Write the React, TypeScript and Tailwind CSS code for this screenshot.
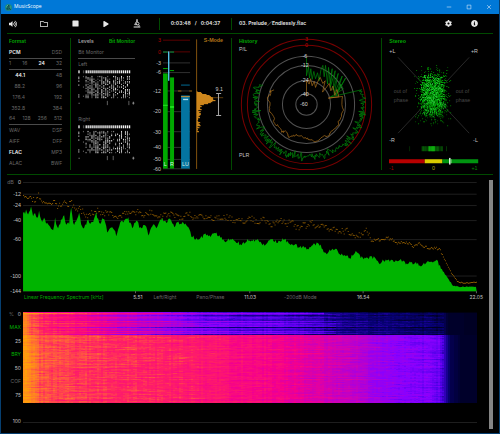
import type { ReactNode } from 'react';
import { clsx } from 'clsx';
import { FaCog, FaInfoCircle, FaPlay, FaRegFolder, FaStop, FaVolumeUp } from 'react-icons/fa';

type Point = [number, number];

// seeded so the plots look the same on every render
function createRandom(seed: number) {
  let s = seed;
  return () => {
    s = (s * 1664525 + 1013904223) % 4294967296;
    return s / 4294967296;
  };
}

function interpolate(points: Point[], x: number) {
  if (x <= points[0][0]) return points[0][1];
  for (let i = 1; i < points.length; i++) {
    const [x1, y1] = points[i];
    const [x0, y0] = points[i - 1];
    if (x <= x1) return y0 + ((y1 - y0) * (x - x0)) / (x1 - x0);
  }
  return points[points.length - 1][1];
}

const toPath = (points: Point[]) =>
  points.map(([x, y], i) => `${i ? 'L' : 'M'}${x.toFixed(1)} ${y.toFixed(1)}`).join('');

/* ---------- Title bar + toolbar ---------- */

function TitleBar() {
  return (
    <header className="flex h-[14px] items-center bg-[#0078d7] px-[7px] text-[5px] text-white">
      <svg viewBox="0 0 14 14" className="-ml-[3px] mr-[2px] size-[7px]">
        <circle cx="7" cy="7" r="7" fill="#1d8a80" />
        <path d="M4 11V8M6 12V3l3 1v5M9 9l2 3" stroke="#0b2d33" strokeWidth="1.5" fill="none" />
        <path d="M3 5l3-3M8 6h3" stroke="#9fe0c0" strokeWidth="1" />
      </svg>
      <h1 className="font-['Open_Sans','Noto_Sans',sans-serif]">MusicScope</h1>
      <div className="ml-auto flex gap-[14px]">
        <WindowButton label="Minimize" d="M1 4h6" />
        <WindowButton label="Maximize" d="M1.5 1.5h5v5h-5z" />
        <WindowButton label="Close" d="M1.5 1.5l5 5M6.5 1.5l-5 5" />
      </div>
    </header>
  );
}

function WindowButton({ label, d }: { label: string; d: string }) {
  return (
    <button aria-label={label}>
      <svg viewBox="0 0 8 8" className="size-[6px]">
        <path d={d} stroke="#d5e8fa" strokeWidth="0.8" fill="none" />
      </svg>
    </button>
  );
}

function MicroscopeIcon() {
  return (
    <svg viewBox="0 0 24 27" className="h-[9px] w-2" fill="none" stroke="currentColor">
      <path d="M12 1v8" strokeWidth="4" />
      <path d="M10 8l-5 9h8" strokeWidth="2.5" />
      <circle cx="14" cy="14" r="4" strokeWidth="2.5" />
      <path d="M17 17c2 2 2 4 0 6M2 24h20" strokeWidth="3" />
    </svg>
  );
}

function IconButton({ label, children }: { label: string; children: ReactNode }) {
  return (
    <button aria-label={label} className="flex w-[10px] justify-center text-[#e8e8e8]">
      {children}
    </button>
  );
}

function Toolbar() {
  return (
    <nav className="mx-[6px] flex h-5 items-center border-b border-[#004a00] text-[5px] font-bold text-[#dcdcdc]">
      <div className="flex h-3 w-[153px] items-center justify-between border-r border-[#004a00] pl-[1px] pr-[17px]">
        <IconButton label="Volume"><FaVolumeUp size={8} /></IconButton>
        <IconButton label="Open"><FaRegFolder size={8} /></IconButton>
        <IconButton label="Stop"><FaStop size={7} /></IconButton>
        <IconButton label="Play"><FaPlay size={6} /></IconButton>
        <IconButton label="Analyze"><MicroscopeIcon /></IconButton>
      </div>
      <div className="flex h-3 w-[72px] items-center justify-center gap-1 border-r border-[#004a00]">
        <span>0:03:48</span>
        <span>/</span>
        <span>0:04:37</span>
      </div>
      <p className="ml-[7px] whitespace-nowrap">03. Prelude／Endlessly.flac</p>
      <div className="ml-auto flex items-center gap-4 pr-[14px]">
        <IconButton label="Settings"><FaCog size={7} /></IconButton>
        <IconButton label="Info"><FaInfoCircle size={7} /></IconButton>
      </div>
    </nav>
  );
}

/* ---------- Format ---------- */

interface FormatRow {
  items: string[];
  active?: string;
  line?: boolean;
  rate?: boolean;
}

const FORMAT_ROWS: FormatRow[] = [
  { items: ['PCM', 'DSD'], active: 'PCM', line: true },
  { items: ['1', '16', '24', '32'], active: '24', line: true },
  { items: ['44.1', '48'], active: '44.1', rate: true },
  { items: ['88.2', '96'], rate: true },
  { items: ['176.4', '192'], rate: true },
  { items: ['352.8', '384'], rate: true },
  { items: ['64', '128', '256', '512'], line: true },
  { items: ['WAV', 'DSF'] },
  { items: ['AIFF', 'DFF'] },
  { items: ['FLAC', 'MP3'], active: 'FLAC' },
  { items: ['ALAC', 'BWF'] },
];

function FormatPanel() {
  return (
    <section className="my-1 border-r border-[#004a00] pl-[2px] pr-[8px]">
      <h2 className="h-[10px] font-semibold leading-[6px] text-[#00a800]">Format</h2>
      {FORMAT_ROWS.map((row) => (
        <div
          key={row.items[0]}
          className={clsx(
            'flex h-[11px] items-center justify-between',
            row.line && 'border-b border-[#4a4a4a]'
          )}
        >
          {row.items.map((item, i) => (
            <span
              key={item}
              className={clsx(
                item === row.active ? 'font-semibold text-[#eeeeee]' : 'text-[#686868]',
                row.rate && i === 0 && 'w-4 text-right'
              )}
            >
              {item}
            </span>
          ))}
        </div>
      ))}
    </section>
  );
}

/* ---------- Bit monitor ---------- */

function BitMatrix({ seed, marks }: { seed: number; marks: number[] }) {
  const random = createRandom(seed);
  const columns = Array.from({ length: 23 }, (_, i) => 38 + i * 6);
  const dots: { x: number; y: number; o: number }[] = [];
  columns.forEach((x) => {
    const density = 0.4 + random() * 0.4;
    for (let y = 18; y < 84; y += 4) {
      if (random() < density) dots.push({ x, y, o: 0.35 + random() * 0.65 });
    }
  });
  [20, 24, 32, 44, 74, 80].forEach((y) => dots.push({ x: 16, y, o: 0.8 }));
  [18, 50, 78].forEach((y) => dots.push({ x: 30, y, o: 0.4 }));

  return (
    <svg viewBox="15 0 174 114" className="block w-full" fill="#f4f4f4">
      <rect x="16" y="1" width="4" height="9" />
      <rect x="30" y="1" width="4" height="9" opacity="0.3" />
      {columns.map((x) => (
        <rect key={x} x={x} y="1" width="4" height="9" />
      ))}
      {dots.map((d, i) => (
        <rect key={i} x={d.x} y={d.y} width="3" height="4" opacity={d.o} />
      ))}
      <g fill="#909090">
        <rect x="16" y="100" width="5" height="2" />
        {marks.map((x) => (
          <rect key={x} x={x} y="94" width="2" height="13" />
        ))}
        <path d="M180 100h7v2h-7zM182 97h3v8h-3z" />
      </g>
    </svg>
  );
}

function BitMonitorPanel() {
  return (
    <section className="my-1 pl-[7px] pr-[12px]">
      <div className="flex h-[10px] justify-between whitespace-nowrap leading-[6px]">
        <button className="flex font-semibold text-[#a0a0a0]">Levels</button>
        <button className="flex font-semibold text-[#00a800]">Bit Monitor</button>
      </div>
      <h2 className="flex h-[11px] items-center border-b border-[#4a4a4a] text-[#686868]">
        Bit Monitor
      </h2>
      <h3 className="h-[11px] leading-[11px] text-[#686868]">Left</h3>
      <BitMatrix seed={11} marks={[103, 169]} />
      <h3 className="mt-[7px] h-[11px] leading-[11px] text-[#686868]">Right</h3>
      <BitMatrix seed={29} marks={[103, 121]} />
    </section>
  );
}

/* ---------- Level meters ---------- */

const METER_SCALE: [string, number][] = [
  ['3', 18], ['0', 53], ['-3', 86], ['-6', 115], ['-12', 170], ['-20', 232],
  ['-30', 292], ['-40', 339], ['-50', 375], ['-60', 403],
];

const LOUDNESS: Point[] = [
  [171, 4], [176, 16], [180, 26], [184, 40], [190, 50], [196, 54], [202, 50], [206, 40],
  [209, 22], [213, 14], [218, 10], [224, 12], [230, 7], [240, 11], [245, 6], [255, 4],
  [270, 10], [275, 5], [290, 3],
];

function MeterPanel() {
  const random = createRandom(5);
  const bars: Point[] = [];
  for (let y = 171; y < 292; y += 3) {
    bars.push([y, Math.max(2, interpolate(LOUDNESS, y) + (random() - 0.5) * 9)]);
  }

  return (
    <section>
      <svg viewBox="6 0 252 420" className="block w-full overflow-visible" fontSize="16">
        {METER_SCALE.map(([label, y]) => {
          const red = label === '3' || label === '0';
          return (
            <g key={label}>
              <rect x="54" y={y - 1} width="81" height="3" fill={red ? '#5c0000' : '#303030'} />
              <text
                x="48"
                y={y}
                textAnchor="end"
                dominantBaseline="central"
                fill={red ? '#b00000' : '#c4c4c4'}
              >
                {label}
              </text>
            </g>
          );
        })}
        <g fill="#00a800">
          <rect x="54" y="118" width="14" height="285" />
          <rect x="75" y="130" width="12" height="273" />
          <rect x="54" y="102" width="14" height="3" />
          <rect x="75" y="108" width="12" height="3" />
          <rect x="54" y="52" width="14" height="4" fill="#007a38" />
          <rect x="75" y="52" width="12" height="4" fill="#007a38" />
          <rect x="54" y="212" width="14" height="3" fill="#20e820" />
          <rect x="75" y="216" width="12" height="5" fill="#20e820" />
        </g>
        <rect x="69" y="52" width="4" height="88" fill="#58c8f0" />
        <rect x="108" y="184" width="26" height="219" fill="#0474a0" />
        <rect x="108" y="151" width="26" height="4" fill="#00506e" />
        <rect x="108" y="186" width="26" height="3" fill="#c88a30" />
        <rect x="114" y="194" width="15" height="4" fill="#b0e0f4" />
        <path d="M99 171h10M133 171h8" stroke="#9a6414" strokeWidth="3" />
        <g fill="#dcece4" textAnchor="middle">
          <text x="61" y="396">L</text>
          <text x="81" y="396">R</text>
          <text x="121" y="396">LU</text>
        </g>

        <rect x="153" y="16" width="3" height="388" fill="#80520e" />
        <g fill="#e89820">
          {bars.map(([y, w]) => (
            <rect key={y} x="155" y={y} width={w} height="3" />
          ))}
        </g>
        <rect x="200" y="190" width="34" height="2" fill="#8a5a10" />
        <path d="M213 178h15M220 178v66M213 244h15" stroke="#a8a8a8" strokeWidth="3" fill="none" />
        <text x="222" y="170" textAnchor="middle" fill="#c8c8c8">9.1</text>
        <text x="205" y="24" textAnchor="middle" fontWeight="bold" fill="#b07418">S-Mode</text>
      </svg>
    </section>
  );
}

/* ---------- History ---------- */

const RINGS: { r: number; label: string; color: string }[] = [
  { r: 195, label: '3', color: '#780000' },
  { r: 177, label: '0', color: '#780000' },
  { r: 144, label: '-6', color: '#525252' },
  { r: 117, label: '-12', color: '#525252' },
  { r: 72, label: '-24', color: '#525252' },
  { r: 32, label: '-40', color: '#525252' },
];

const PLR_RADIUS: Point[] = [
  [76, 170], [90, 168], [115, 166], [135, 165], [155, 158], [180, 155],
  [205, 158], [230, 157], [250, 153], [270, 150], [283, 156], [294, 148],
];

const LOUDNESS_POINTS: Point[] = [
  [235, 187], [235, 138], [243, 150], [247, 134], [252, 155], [258, 142], [262, 160], [270, 140],
  [276, 130], [284, 148], [291, 140], [283, 174], [296, 158], [303, 148], [308, 170], [314, 156],
  [320, 184], [326, 166], [332, 188], [300, 192], [343, 187], [346, 228], [338, 250],
  [326, 276], [310, 290], [298, 306], [283, 308], [262, 322], [240, 316], [232, 310],
  [210, 305], [196, 303], [182, 310], [172, 290], [160, 294], [150, 276], [140, 268],
  [132, 240], [124, 228], [126, 208], [118, 190], [128, 178], [126, 170], [138, 168],
];

const PEAK_POINTS: Point[] = [
  [235, 72], [235, 125], [241, 98], [244, 132], [248, 104], [252, 136], [257, 112], [262, 134],
  [268, 116], [273, 140], [278, 108], [284, 94], [288, 128], [292, 94], [298, 150], [301, 100],
  [306, 148], [312, 104], [306, 160], [321, 110], [314, 168], [330, 118], [318, 178],
  [342, 126], [324, 184], [352, 132], [330, 170], [338, 150], [345, 165], [306, 189], [400, 167],
];

function HistoryPanel() {
  const random = createRandom(77);
  const plr: Point[] = [];
  for (let a = 76; a <= 294; a += 0.8) {
    const rad = (a * Math.PI) / 180;
    const r = interpolate(PLR_RADIUS, a) + (random() + random() - 1) * 15;
    plr.push([235 + Math.sin(rad) * r, 211 - Math.cos(rad) * r]);
  }
  const loudness: Point[] = [];
  LOUDNESS_POINTS.forEach(([x, y], i) => {
    loudness.push([x, y]);
    const next = LOUDNESS_POINTS[i + 1];
    if (i > 19 && next) {
      for (let k = 1; k < 4; k++) {
        loudness.push([
          x + ((next[0] - x) * k) / 4 + (random() - 0.5) * 7,
          y + ((next[1] - y) * k) / 4 + (random() - 0.5) * 7,
        ]);
      }
    }
  });

  return (
    <section className="my-1 border-l border-[#004a00]">
      <svg viewBox="12 12 444 396" className="block w-full overflow-visible" fill="none" fontSize="16">
        {RINGS.map((ring) => (
          <circle key={ring.r} cx="235" cy="211" r={ring.r} stroke={ring.color} strokeWidth="3" />
        ))}
        <path d={toPath([...PEAK_POINTS, ...plr])} stroke="#008c0a" strokeWidth="2" />
        <path d={toPath(loudness)} stroke="#b0741c" strokeWidth="2" />
        {RINGS.map((ring) => (
          <text
            key={ring.r}
            x={ring.r > 170 ? 235 : 230}
            y={211 - ring.r}
            textAnchor="middle"
            dominantBaseline="central"
            fill={ring.r > 170 ? '#c00000' : '#d8d8d8'}
          >
            {ring.label}
          </text>
        ))}
        <text x="227" y="211" textAnchor="middle" dominantBaseline="central" fill="#d8d8d8">
          -60
        </text>
        <text x="33" y="26" fontWeight="bold" fill="#00a800">History</text>
        <text x="33" y="50" fill="#c4c4c4">P/L</text>
        <text x="33" y="368" fill="#c4c4c4">PLR</text>
      </svg>
    </section>
  );
}

/* ---------- Stereo ---------- */

const CLOUD_SHADES = ['#004800', '#007400', '#009c08', '#20bc30'];

function StereoPanel() {
  const random = createRandom(404);
  const cloud = CLOUD_SHADES.map(() => '');
  const addDot = (dx: number, dy: number, level: number) => {
    const x = Math.round((161 + dx) / 3) * 3;
    const y = Math.round((182 + dy) / 3) * 3;
    cloud[Math.min(3, Math.floor(level))] += `M${x} ${y}h3v3h-3z`;
  };
  // loose halo first, dense core on top
  for (let i = 0; i < 700; i++) {
    addDot((random() + random() - 1) * 58, (random() + random() - 1) * 96, random() * 1.8);
  }
  for (let i = 0; i < 1500; i++) {
    addDot((random() + random() * 0.5 - 0.75) * 54, (random() + random() * 0.5 - 0.75) * 88, random() * 3.5);
  }
  const strip = Array.from({ length: 24 }, (_, i) => ({
    x: 126 + i * 2.7,
    o: 0.15 + 0.75 * random() * (1 - Math.abs(i - 12) / 18),
  }));

  return (
    <section className="my-1 border-l border-[#004a00]">
      <svg viewBox="9 12 333 396" className="block w-full overflow-visible" fontSize="16">
        <path d="M57 70L270 297M270 70L57 297" stroke="#3c3c3c" strokeWidth="2" />
        {cloud.map((d, i) => (
          <path key={i} d={d} fill={CLOUD_SHADES[i]} />
        ))}
        <text x="31" y="26" fontWeight="bold" fill="#00a800">Stereo</text>
        <g fill="#c4c4c4">
          <text x="31" y="57">+L</text>
          <text x="296" y="57" textAnchor="end">+R</text>
          <text x="31" y="322">-R</text>
          <text x="296" y="322" textAnchor="end">-L</text>
        </g>
        <g fill="#484848">
          <text x="44" y="176">out of</text>
          <text x="44" y="203">phase</text>
          <text x="230" y="176">out of</text>
          <text x="230" y="203">phase</text>
        </g>
        <g fill="#10c010">
          {strip.map((s) => (
            <rect key={s.x} x={s.x} y="336" width="3" height="15" opacity={s.o} />
          ))}
          <rect x="148" y="336" width="20" height="15" opacity="0.7" />
          <rect x="91" y="336" width="2" height="15" opacity="0.3" />
          <rect x="201" y="336" width="2" height="15" opacity="0.4" />
        </g>
        <rect x="30" y="375" width="107" height="12" fill="#b80000" />
        <rect x="137" y="375" width="53" height="12" fill="#dccc00" />
        <rect x="190" y="375" width="107" height="12" fill="#009410" />
        <rect x="210" y="371" width="4" height="20" fill="#ffffff" />
        <rect x="216" y="375" width="2" height="12" fill="#70c070" />
        <text x="30" y="408" fill="#a00000">-1</text>
        <text x="163" y="408" textAnchor="middle" fill="#b4a800">0</text>
        <text x="295" y="408" textAnchor="end" fill="#008c00">+1</text>
      </svg>
    </section>
  );
}

/* ---------- Frequency spectrum ---------- */

const SPECTRUM_SCALE: [string, number][] = [
  ['0', 25], ['-12', 60], ['-24', 94], ['-40', 139], ['-60', 196], ['-100', 305], ['-144', 350],
];

const CURRENT: Point[] = [
  [69, 120], [78, 112], [85, 125], [92, 97], [98, 125], [103, 112], [112, 140], [116, 110],
  [124, 145], [132, 130], [140, 150], [150, 158], [160, 168], [165, 135], [172, 160], [180, 150],
  [190, 120], [197, 148], [207, 148], [213, 96], [220, 150], [230, 140], [238, 118], [245, 160],
  [255, 155], [262, 138], [275, 150], [288, 117], [297, 150], [308, 130], [315, 145], [322, 180],
  [335, 155], [348, 183], [360, 145], [372, 140], [383, 133], [395, 160], [411, 136], [418, 165],
  [434, 152], [445, 182], [457, 150], [470, 160], [484, 133], [495, 145], [508, 138], [520, 155],
  [535, 145], [560, 152], [572, 182], [590, 198], [605, 190], [616, 180], [630, 188], [645, 176],
  [660, 188], [672, 205], [690, 195], [710, 203], [724, 215], [740, 195], [750, 200], [770, 198],
  [790, 212], [800, 205], [812, 196], [830, 205], [850, 195], [870, 210], [900, 218], [920, 222],
  [935, 215], [950, 208], [962, 218], [970, 238], [990, 230], [1005, 225], [1025, 245],
  [1050, 250], [1068, 230], [1080, 250], [1100, 252], [1122, 248], [1132, 268], [1150, 258],
  [1170, 262], [1195, 255], [1215, 268], [1240, 266], [1260, 272], [1280, 263], [1310, 262],
  [1325, 290], [1340, 310], [1355, 333], [1380, 338], [1400, 338], [1427, 336],
];

const MAXIMUM: Point[] = [
  [69, 70], [85, 72], [100, 78], [115, 62], [130, 88], [150, 85], [163, 75], [172, 98],
  [190, 88], [205, 90], [213, 85], [222, 105], [240, 105], [258, 122], [275, 115], [290, 108],
  [310, 118], [330, 115], [345, 128], [365, 122], [385, 110], [410, 112], [430, 125], [452, 110],
  [475, 128], [500, 118], [530, 125], [545, 130], [560, 115], [580, 130], [600, 122], [625, 128],
  [650, 132], [670, 125], [700, 138], [730, 142], [750, 130], [765, 142], [790, 132], [810, 150],
  [840, 138], [855, 150], [870, 140], [890, 162], [905, 145], [920, 158], [932, 138], [945, 165],
  [965, 148], [990, 165], [1020, 168], [1040, 170], [1060, 182], [1085, 180], [1093, 160],
  [1110, 198], [1135, 195], [1160, 190], [1190, 205], [1220, 203], [1235, 218], [1255, 208],
  [1280, 220], [1315, 222], [1330, 255], [1350, 295], [1370, 322], [1390, 325], [1427, 323],
];

function SpectrumChart() {
  const random = createRandom(9);
  const current: Point[] = [];
  for (let x = 69; x <= 1427; x += 3) {
    const amount = x > 1320 ? 4 : 11;
    current.push([x, interpolate(CURRENT, x) + (random() - 0.5) * amount]);
  }
  let dots = '';
  for (let x = 69; x <= 1427; x += 3) {
    const amount = x > 1320 ? 2 : x > 1110 ? 9 : 18;
    const y = interpolate(MAXIMUM, x) + (random() - 0.5) * amount;
    dots += `M${x} ${y.toFixed(1)}h3v3h-3z`;
  }

  return (
    <svg viewBox="21 6 1407 348" className="block w-full overflow-visible" fontSize="16">
      {SPECTRUM_SCALE.map(([label, y]) => (
        <g key={label}>
          <rect x="69" y={y - 1} width="1358" height="3" fill="#1e1e1e" />
          <text x="63" y={y} textAnchor="end" dominantBaseline="central" fill="#c4c4c4">
            {label}
          </text>
        </g>
      ))}
      <text x="22" y="25" dominantBaseline="central" fill="#686868">dB</text>
      <path d={dots} fill="#8c5a00" />
      <path d={`${toPath(current)}L1427 351L69 351Z`} fill="#00b400" />
      {[406, 748, 1087, 1426].map((x) => (
        <rect key={x} x={x - 1} y="351" width="2" height="6" fill="#909090" />
      ))}
    </svg>
  );
}

function FrequencyAxis() {
  const value = '-mr-[6px] text-[#c4c4c4]';
  return (
    <div className="ml-4 grid h-[9px] grid-cols-4 items-center whitespace-nowrap leading-[6px] text-[#686868]">
      <div className="flex justify-between pl-[1px]">
        <button className="text-[#00a800]">Linear Frequency Spectrum [kHz]</button>
        <span className={value}>5.51</span>
      </div>
      <div className="flex justify-between pl-[17px]">
        <button>Left/Right</button>
        <button>Pano/Phase</button>
        <span className={value}>11.03</span>
      </div>
      <div className="flex justify-between pl-[34px]">
        <button>-200dB Mode</button>
        <span className={value}>16.54</span>
      </div>
      <div className="flex justify-end">
        <span className={value}>22.05</span>
      </div>
    </div>
  );
}

/* ---------- Spectrogram ---------- */

const PALETTE: [number, number, number, number][] = [
  [0, 0, 0, 16],
  [0.08, 0, 0, 40],
  [0.2, 8, 0, 120],
  [0.35, 80, 0, 232],
  [0.45, 136, 0, 255],
  [0.6, 200, 0, 190],
  [0.7, 245, 0, 140],
  [0.8, 255, 32, 100],
  [0.9, 255, 110, 50],
  [1, 255, 160, 8],
];

const LEVELS = 60;

const paletteColor = (t: number) => {
  const [r, g, b] = [1, 2, 3].map((c) =>
    Math.round(interpolate(PALETTE.map((p): Point => [p[0], p[c]]), t))
  );
  return `rgb(${r},${g},${b})`;
};

const LOWER: Point[] = [
  [0, 0.99], [6, 0.95], [16, 0.87], [50, 0.83], [100, 0.81], [170, 0.78], [227, 0.73],
  [277, 0.67], [330, 0.58], [360, 0.48], [400, 0.43], [414, 0.4], [420, 0.28], [426, 0.14],
  [436, 0.09], [453, 0.08],
];

const UPPER: Point[] = [
  [0, 0.96], [6, 0.88], [20, 0.8], [60, 0.73], [100, 0.62], [140, 0.53], [180, 0.42], [230, 0.38],
  [280, 0.34], [320, 0.23], [400, 0.17], [418, 0.15], [424, 0.08], [453, 0.07],
];

function Spectrogram() {
  const random = createRandom(2024);
  const columnNoise = Array.from({ length: 227 }, () => (random() - 0.5) * 0.035);
  const cells = Array.from({ length: LEVELS + 1 }, () => '');

  for (let y = 0; y < 91; y++) {
    const upper = y < 23;
    const row = (random() - 0.5) * (upper ? 0.14 : 0.035);
    const dark = upper && (y === 3 || y === 7 || y === 15 || y === 22) ? -0.12 : 0;
    let drift = 0;
    for (let i = 0; i < 227; i++) {
      const x = i * 2;
      drift = drift * 0.75 + (random() - 0.5) * 0.04;
      let t = interpolate(upper ? UPPER : LOWER, x);
      if (y === 0) t -= 0.1;
      if (y === 1 && x < 300) t += 0.12;
      if (x < 420) {
        const fade = upper ? Math.min(1, (x + 20) / 120) * (x > 310 ? 0.4 : 1) : 1;
        t += (row + dark) * fade + columnNoise[i] + drift;
      }
      const level = Math.round(Math.min(1, Math.max(0, t)) * LEVELS);
      cells[level] += `M${x} ${y}h2v1h-2z`;
    }
  }

  return (
    <svg
      viewBox="0 0 453 91"
      preserveAspectRatio="none"
      shapeRendering="crispEdges"
      className="block h-[91px] w-full"
    >
      {cells.map((d, i) => d && <path key={i} d={d} fill={paletteColor(i / LEVELS)} />)}
    </svg>
  );
}

function SpectrogramPanel() {
  return (
    <section className="flex gap-[2px] pt-[10px] leading-[7px] text-[#c4c4c4]">
      <div className="-mt-[1px] w-[14px] text-right">
        <div className="flex h-[88px] flex-col items-end justify-between">
          <p className="flex w-full justify-between">
            <span className="pl-[2px] text-[#686868]">%</span>
            <span>0</span>
          </p>
          <button className="text-[#00b400]">MAX</button>
          <span>25</span>
          <button className="text-[#00b400]">BRY</button>
          <span>50</span>
          <button className="text-[#686868]">COF</button>
          <span>75</span>
        </div>
        <p className="mt-[19px]">100</p>
      </div>
      <div className="min-w-0 flex-1">
        <Spectrogram />
        <hr className="mt-[19px] border-[#1e1e1e]" />
      </div>
    </section>
  );
}

export default function App() {
  return (
    <main className="flex min-h-screen flex-col border-x border-b border-[#063f70] bg-black font-['Inter','Noto_Sans_CJK_JP',sans-serif] text-[5px]">
      <TitleBar />
      <Toolbar />
      <div className="mx-[6px] grid grid-cols-[64fr_76fr_84fr_149fr_112fr] border-b border-[#004a00] [&_svg]:font-['Liberation_Sans',sans-serif]">
        <FormatPanel />
        <BitMonitorPanel />
        <MeterPanel />
        <HistoryPanel />
        <StereoPanel />
      </div>
      <div className="mx-[6px] flex flex-1 gap-3 pt-px [&_svg]:font-['Liberation_Sans',sans-serif]">
        <div className="min-w-0 flex-1">
          <SpectrumChart />
          <FrequencyAxis />
          <SpectrogramPanel />
        </div>
        <div className="mb-1 mt-1 w-1 bg-[#858585]" />
      </div>
    </main>
  );
}
